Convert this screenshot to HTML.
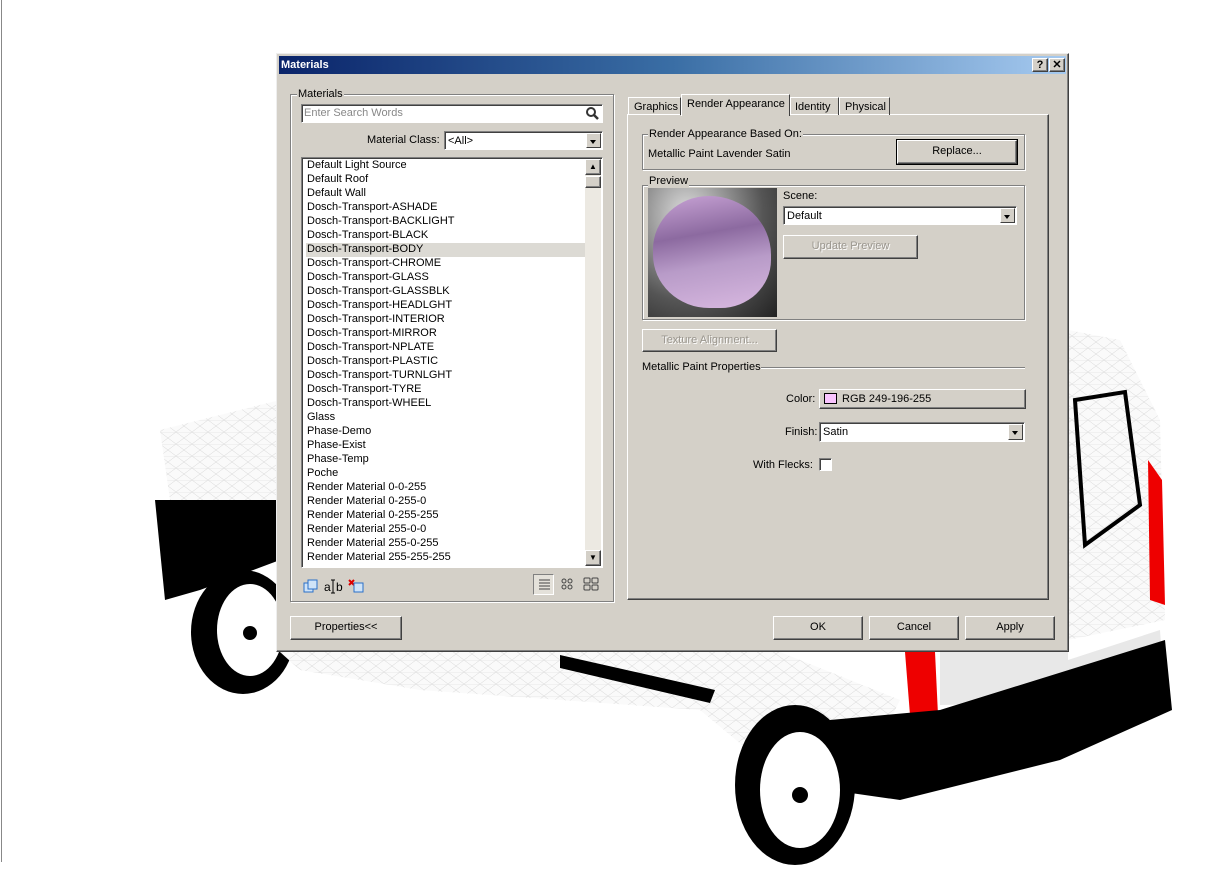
<!DOCTYPE html>
<html><head><meta charset="utf-8"><style>
*{box-sizing:border-box}
body{margin:0;width:1221px;height:869px;background:#fff;position:relative;overflow:hidden;font-family:"Liberation Sans",sans-serif;font-size:11px;color:#000}
.a{position:absolute;white-space:nowrap}
.dlg{left:276px;top:53px;width:793px;height:599px;background:#d4d0c8;border:1px solid;border-color:#eee #404040 #404040 #eee;box-shadow:inset -1px -1px #808080}
.tb{left:2px;top:2px;width:787px;height:18px;background:linear-gradient(90deg,#0a246a,#3a6ea5 50%,#a6caf0);color:#fff;font-weight:bold;font-size:11px;padding:3px 2px}
.grp{border:1px solid #808080;box-shadow:1px 1px #fff, inset 1px 1px #fff}
.lbl{background:#d4d0c8;padding:0 1px;line-height:12px}
.sunk{background:#fff;border:1px solid;border-color:#808080 #fff #fff #808080;box-shadow:inset 1px 1px #404040}
.btn{background:#d4d0c8;border:1px solid;border-color:#fff #404040 #404040 #fff;box-shadow:inset -1px -1px #808080;text-align:center;line-height:20px}
.dd{position:absolute;right:1px;top:1px;bottom:1px;width:15px;background:#d4d0c8;border:1px solid;border-color:#fff #404040 #404040 #fff}
.dd:after{content:"";position:absolute;left:3px;top:6px;border:3.5px solid transparent;border-top:4px solid #000}
.it{position:absolute;left:5px;line-height:14px;white-space:nowrap}
.dis{color:#9a968e;text-shadow:1px 1px #fff}
.tab{border:1px solid;border-bottom:0;border-color:#fff #404040 #404040 #fff;padding:3px 5px;line-height:13px}
</style></head><body>
<div class="a" style="left:1px;top:0;width:1px;height:862px;background:#888"></div>
<svg class="a" style="left:0;top:0" width="1221" height="869">
<defs><pattern id="w" width="16" height="12" patternUnits="userSpaceOnUse"><rect width="16" height="12" fill="#fafafa"/><path d="M0 0L16 12M0 12L16 0M0 0H16" stroke="#d6d6d6" stroke-width=".5"/></pattern></defs>
<path d="M160 430 L280 400 L280 500 L170 500Z" fill="url(#w)"/>
<path d="M155 500 L280 500 L280 560 L200 590 L165 600Z" fill="#000"/>
<ellipse cx="243" cy="632" rx="52" ry="62" fill="#000"/>
<ellipse cx="250" cy="630" rx="33" ry="46" fill="#fff"/>
<circle cx="250" cy="633" r="7" fill="#000"/>
<path d="M280 652 L780 652 L900 700 L880 740 L760 760 L700 710 L420 690 L300 670Z" fill="url(#w)"/>
<path d="M560 655 L715 690 L710 703 L560 668Z" fill="#000"/>
<path d="M1068 330 L1120 340 L1160 420 L1165 620 L1068 640Z" fill="url(#w)"/>
<path d="M1075 400 L1125 392 L1140 505 L1085 545Z" fill="none" stroke="#000" stroke-width="4"/>
<path d="M1148 460 L1162 480 L1165 605 L1150 600Z" fill="#e00"/>
<path d="M940 652 L1068 640 L1068 660 L1160 630 L1165 700 L940 705Z" fill="#e8e8e8"/>
<path d="M905 652 L935 652 L938 715 L910 715Z" fill="#e00"/>
<path d="M830 720 L940 710 L1165 640 L1172 710 L1060 760 L900 800 L830 790Z" fill="#000"/>
<ellipse cx="795" cy="785" rx="60" ry="80" fill="#000"/>
<ellipse cx="800" cy="790" rx="40" ry="58" fill="#fff"/>
<circle cx="800" cy="795" r="8" fill="#000"/>
</svg>
<div class="a dlg">
 <div class="a tb">Materials</div>
 <div class="a btn" style="left:755px;top:4px;width:16px;height:14px;line-height:12px;font-weight:bold">?</div>
 <div class="a btn" style="left:772px;top:4px;width:16px;height:14px;line-height:12px;font-weight:bold">✕</div>
 <div class="a grp" style="left:13px;top:40px;width:324px;height:508px"></div>
 <div class="a lbl" style="left:20px;top:34px">Materials</div>
 <div class="a sunk" style="left:24px;top:50px;width:302px;height:19px;color:#888;padding:2px 2px">Enter Search Words
  <svg class="a" style="right:3px;top:2px" width="13" height="13"><circle cx="5" cy="5" r="4" fill="none" stroke="#333" stroke-width="2"/><path d="M8 8L12 12" stroke="#333" stroke-width="2.5"/></svg></div>
 <div class="a" style="left:90px;top:80px">Material Class:</div>
 <div class="a sunk" style="left:167px;top:77px;width:159px;height:19px;padding:3px 3px">&lt;All&gt;<div class="dd"></div></div>
 <div class="a sunk" style="left:24px;top:103px;width:302px;height:411px">
  <div class="a" style="left:4px;top:85px;width:281px;height:14px;background:#dcdad4"></div>
  <div class="it" style="top:0px">Default Light Source</div><div class="it" style="top:14px">Default Roof</div><div class="it" style="top:28px">Default Wall</div><div class="it" style="top:42px">Dosch-Transport-ASHADE</div><div class="it" style="top:56px">Dosch-Transport-BACKLIGHT</div><div class="it" style="top:70px">Dosch-Transport-BLACK</div><div class="it" style="top:84px">Dosch-Transport-BODY</div><div class="it" style="top:98px">Dosch-Transport-CHROME</div><div class="it" style="top:112px">Dosch-Transport-GLASS</div><div class="it" style="top:126px">Dosch-Transport-GLASSBLK</div><div class="it" style="top:140px">Dosch-Transport-HEADLGHT</div><div class="it" style="top:154px">Dosch-Transport-INTERIOR</div><div class="it" style="top:168px">Dosch-Transport-MIRROR</div><div class="it" style="top:182px">Dosch-Transport-NPLATE</div><div class="it" style="top:196px">Dosch-Transport-PLASTIC</div><div class="it" style="top:210px">Dosch-Transport-TURNLGHT</div><div class="it" style="top:224px">Dosch-Transport-TYRE</div><div class="it" style="top:238px">Dosch-Transport-WHEEL</div><div class="it" style="top:252px">Glass</div><div class="it" style="top:266px">Phase-Demo</div><div class="it" style="top:280px">Phase-Exist</div><div class="it" style="top:294px">Phase-Temp</div><div class="it" style="top:308px">Poche</div><div class="it" style="top:322px">Render Material 0-0-255</div><div class="it" style="top:336px">Render Material 0-255-0</div><div class="it" style="top:350px">Render Material 0-255-255</div><div class="it" style="top:364px">Render Material 255-0-0</div><div class="it" style="top:378px">Render Material 255-0-255</div><div class="it" style="top:392px">Render Material 255-255-255</div>
  <div class="a" style="right:1px;top:1px;width:16px;bottom:1px;background:#ece9e2"></div>
  <div class="a btn" style="right:1px;top:1px;width:16px;height:16px;line-height:14px;font-size:8px">▲</div>
  <div class="a btn" style="right:1px;top:18px;width:16px;height:12px"></div>
  <div class="a btn" style="right:1px;bottom:1px;width:16px;height:16px;line-height:14px;font-size:8px">▼</div>
 </div>
 <svg class="a" style="left:25px;top:524px" width="80" height="16"><rect x="2" y="5" width="9" height="9" fill="#cfe3f7" stroke="#2a6fc9"/><rect x="6" y="2" width="9" height="9" fill="#cfe3f7" stroke="#2a6fc9"/><text x="22" y="13" font-size="12" font-family="Liberation Sans">a</text><path d="M31 2V15M29 2H33M29 15H33" stroke="#000"/><text x="34" y="13" font-size="12" font-family="Liberation Sans">b</text><path d="M47 2L52 7M52 2L47 7" stroke="#d00" stroke-width="2"/><rect x="52" y="5" width="9" height="9" fill="#cfe3f7" stroke="#2a6fc9"/></svg>
 <div class="a" style="left:256px;top:520px;width:21px;height:21px;border:1px solid;border-color:#808080 #fff #fff #808080;background:#e4e1da"></div>
 <svg class="a" style="left:259px;top:523px" width="70" height="16"><path d="M3 3H14M3 6H14M3 9H14M3 12H14" stroke="#444"/><circle cx="28" cy="4" r="2" fill="none" stroke="#444"/><circle cx="34" cy="4" r="2" fill="none" stroke="#444"/><circle cx="28" cy="10" r="2" fill="none" stroke="#444"/><circle cx="34" cy="10" r="2" fill="none" stroke="#444"/><rect x="48" y="1" width="6" height="5" rx="1" fill="none" stroke="#444"/><rect x="56" y="1" width="6" height="5" rx="1" fill="none" stroke="#444"/><rect x="48" y="8" width="6" height="5" rx="1" fill="none" stroke="#444"/><rect x="56" y="8" width="6" height="5" rx="1" fill="none" stroke="#444"/></svg>
 <div class="a" style="left:350px;top:60px;width:422px;height:486px;border:1px solid;border-color:#fff #404040 #404040 #fff;box-shadow:inset -1px -1px #808080"></div>
 <div class="a tab" style="left:351px;top:43px;width:53px;height:18px">Graphics</div>
 <div class="a tab" style="left:404px;top:40px;width:109px;height:22px;background:#d4d0c8">Render Appearance</div>
 <div class="a tab" style="left:513px;top:43px;width:49px;height:18px;padding:3px 4px">Identity</div>
 <div class="a tab" style="left:562px;top:43px;width:51px;height:18px">Physical</div>
 <div class="a grp" style="left:365px;top:80px;width:383px;height:36px"></div>
 <div class="a lbl" style="left:371px;top:74px">Render Appearance Based On:</div>
 <div class="a" style="left:371px;top:94px">Metallic Paint Lavender Satin</div>
 <div class="a btn" style="left:620px;top:86px;width:120px;height:24px;outline:1px solid #000">Replace...</div>
 <div class="a grp" style="left:365px;top:131px;width:383px;height:135px"></div>
 <div class="a lbl" style="left:371px;top:121px">Preview</div>
 <div class="a" style="left:371px;top:134px;width:129px;height:129px;background:radial-gradient(ellipse at 30% 20%,#ddd 0,#555 60%,#222)">
  <div class="a" style="left:5px;top:8px;width:118px;height:112px;border-radius:50% 55% 45% 50%;background:linear-gradient(170deg,#c9a4d6 0,#8c6aa0 35%,#b89bc8 60%,#d8b8e0 100%)"></div></div>
 <div class="a" style="left:506px;top:136px">Scene:</div>
 <div class="a sunk" style="left:506px;top:152px;width:234px;height:19px;padding:3px 3px">Default<div class="dd"></div></div>
 <div class="a btn dis" style="left:506px;top:181px;width:135px;height:24px">Update Preview</div>
 <div class="a btn dis" style="left:365px;top:275px;width:135px;height:23px">Texture Alignment...</div>
 <div class="a" style="left:365px;top:307px">Metallic Paint Properties</div>
 <div class="a" style="left:484px;top:313px;width:264px;height:2px;border-top:1px solid #808080;border-bottom:1px solid #fff"></div>
 <div class="a" style="left:509px;top:339px">Color:</div>
 <div class="a btn" style="left:542px;top:335px;width:207px;height:20px;line-height:18px;text-align:left;padding-left:22px">RGB 249-196-255<div class="a" style="left:4px;top:3px;width:13px;height:11px;background:#f9c4ff;border:1px solid #000"></div></div>
 <div class="a" style="left:508px;top:372px">Finish:</div>
 <div class="a sunk" style="left:542px;top:368px;width:206px;height:20px;padding:3px 3px">Satin<div class="dd"></div></div>
 <div class="a" style="left:476px;top:405px">With Flecks:</div>
 <div class="a sunk" style="left:542px;top:404px;width:13px;height:13px"></div>
 <div class="a btn" style="left:13px;top:562px;width:112px;height:24px">Properties&lt;&lt;</div>
 <div class="a btn" style="left:496px;top:562px;width:90px;height:24px">OK</div>
 <div class="a btn" style="left:592px;top:562px;width:90px;height:24px">Cancel</div>
 <div class="a btn" style="left:688px;top:562px;width:90px;height:24px">Apply</div>
</div>
</body></html>
